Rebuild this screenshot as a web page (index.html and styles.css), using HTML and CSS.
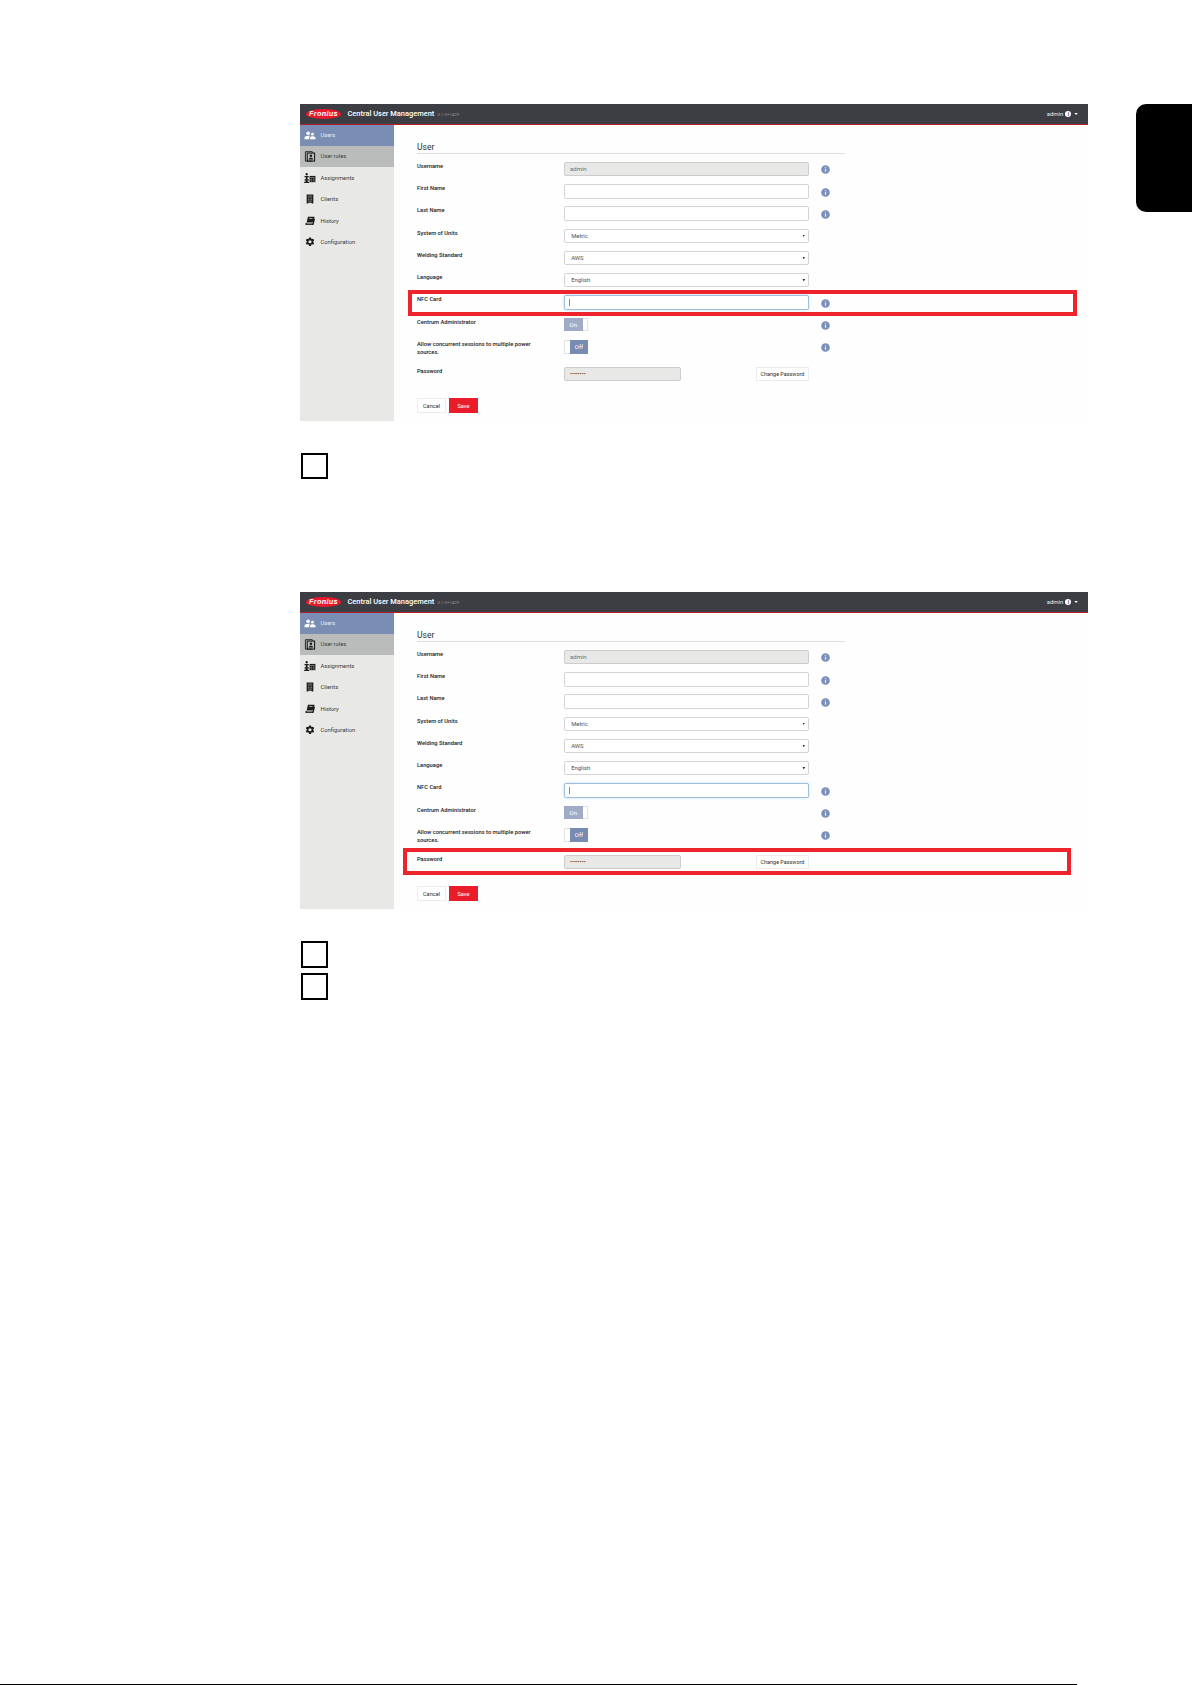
FILE: index.html
```html
<!DOCTYPE html>
<html lang="en">
<head>
<meta charset="utf-8">
<title>Central User Management</title>
<link rel="stylesheet" href="styles.css">
</head>
<body>
<svg class="defs" width="0" height="0">
  <symbol id="info" viewBox="0 0 24 24"><circle cx="12" cy="12" r="11.5" fill="#7b90b8"/><path d="M10.4 10.5h3.2v7.5h-3.2zM10.4 6h3.2v2.8h-3.2z" fill="#e8ecf5"/></symbol>
  <symbol id="users" viewBox="0 0 24 24"><circle cx="8" cy="7" r="4"/><circle cx="17.5" cy="9" r="3"/><path d="M0 20v-3c0-3 4-4.500 8-4.500 1.500 0 3 .2 4.200.7-1.500 1-2.200 2.300-2.200 4V20zM12 20v-2.500c0-2.500 3-3.700 5.700-3.700S24 15 24 17.500V20z"/></symbol>
  <symbol id="roles" viewBox="0 0 24 24"><path d="M2 5v17h15" fill="none" stroke="currentColor" stroke-width="2"/><path d="M2 5V1.500h15V4" fill="none" stroke="currentColor" stroke-width="2"/><rect x="6" y="4.500" width="16" height="17.500" fill="none" stroke="currentColor" stroke-width="2.400"/><circle cx="14" cy="10.500" r="2.800"/><path d="M9 18.500c0-3 2.500-4 5-4s5 1 5 4z"/></symbol>
  <symbol id="assign" viewBox="0 0 28 24"><circle cx="6" cy="3" r="2.800"/><path d="M1 7h10v3H8v5h3v3H8.500v3H12v3H0v-3h3.500v-3H1v-3h3v-5H1z"/><path d="M13 7h14v15H13z"/><path d="M15 11h10M15 15h4M21 15h4M15 19h4M21 19h4" stroke="#d0d0ce" stroke-width="1.300"/></symbol>
  <symbol id="clients" viewBox="0 0 24 24"><path d="M4 1h16v22h-4v-2H8v2H4z"/><path d="M7 5h10M7 9h4M13 9h4M7 13h4M13 13h4M7 17h10" stroke="#c8c8c6" stroke-width="1.300"/></symbol>
  <symbol id="history" viewBox="0 0 24 24"><path d="M7 2h16l-3 13H4zM3 16h16l3-10 2 1-3.500 14.500H3C0 21.500 0 16.500 3 16z"/><path d="M10 6h8M4 18.500h14" stroke="#e8e8e6" stroke-width="1.500"/></symbol>
  <symbol id="gear" viewBox="0 0 24 24"><path fill-rule="evenodd" d="M9.500 1h5l.6 3.200 2 1.100 3-1.100 2.500 4.300-2.400 2.100v2.600l2.400 2.200-2.500 4.300-3-1.100-2 1.200-.6 3.200h-5l-.6-3.200-2-1.200-3 1.100-2.500-4.300 2.400-2.200v-2.600L1.400 8.500l2.500-4.300 3 1.100 2-1.100zM12 8a4 4 0 1 0 0 8 4 4 0 0 0 0-8z"/></symbol>
</svg>

<main class="page">
  <section class="app">
    <header class="bar">
      <span class="logo">Fronius</span><h1 class="brand">Central User Management</h1><span class="version">0.1.0+1409</span>
      <span class="account">admin</span><span class="avatar">i</span><span class="caret"></span>
    </header>
    <div class="body">
      <nav class="side">
        <a class="item active"><svg><use href="#users"/></svg>Users</a>
        <a class="item hover"><svg><use href="#roles"/></svg>User roles</a>
        <a class="item"><svg><use href="#assign"/></svg>Assignments</a>
        <a class="item"><svg><use href="#clients"/></svg>Clients</a>
        <a class="item"><svg><use href="#history"/></svg>History</a>
        <a class="item"><svg class="small"><use href="#gear"/></svg>Configuration</a>
      </nav>
      <div class="form">
        <h2 class="title">User</h2>
        <div class="row"><label>Username</label><div class="field disabled">admin</div><svg class="info"><use href="#info"/></svg></div>
        <div class="row"><label>First Name</label><div class="field"></div><svg class="info"><use href="#info"/></svg></div>
        <div class="row"><label>Last Name</label><div class="field"></div><svg class="info"><use href="#info"/></svg></div>
        <div class="row"><label>System of Units</label><div class="field select">Metric</div></div>
        <div class="row"><label>Welding Standard</label><div class="field select">AWS</div></div>
        <div class="row"><label>Language</label><div class="field select">English</div></div>
        <div class="row"><label>NFC Card</label><div class="field focus"><i class="cursor"></i></div><svg class="info"><use href="#info"/></svg></div>
        <div class="row"><label>Centrum Administrator</label><div class="toggle on"><b>On</b></div><svg class="info"><use href="#info"/></svg></div>
        <div class="row tall"><label>Allow concurrent sessions to multiple power sources.</label><div class="toggle off"><b>Off</b></div><svg class="info"><use href="#info"/></svg></div>
        <div class="row last"><label>Password</label><div class="pair"><div class="field disabled secret">••••••••</div><button class="btn change">Change Password</button></div></div>
        <div class="actions"><button class="btn cancel">Cancel</button><button class="btn save">Save</button></div>
      </div>
    </div>
    <div class="mark nfc"></div>
  </section>
  <div class="steps first"><div class="step"></div></div>

  <section class="app">
    <header class="bar">
      <span class="logo">Fronius</span><h1 class="brand">Central User Management</h1><span class="version">0.1.0+1409</span>
      <span class="account">admin</span><span class="avatar">i</span><span class="caret"></span>
    </header>
    <div class="body">
      <nav class="side">
        <a class="item active"><svg><use href="#users"/></svg>Users</a>
        <a class="item hover"><svg><use href="#roles"/></svg>User roles</a>
        <a class="item"><svg><use href="#assign"/></svg>Assignments</a>
        <a class="item"><svg><use href="#clients"/></svg>Clients</a>
        <a class="item"><svg><use href="#history"/></svg>History</a>
        <a class="item"><svg class="small"><use href="#gear"/></svg>Configuration</a>
      </nav>
      <div class="form">
        <h2 class="title">User</h2>
        <div class="row"><label>Username</label><div class="field disabled">admin</div><svg class="info"><use href="#info"/></svg></div>
        <div class="row"><label>First Name</label><div class="field"></div><svg class="info"><use href="#info"/></svg></div>
        <div class="row"><label>Last Name</label><div class="field"></div><svg class="info"><use href="#info"/></svg></div>
        <div class="row"><label>System of Units</label><div class="field select">Metric</div></div>
        <div class="row"><label>Welding Standard</label><div class="field select">AWS</div></div>
        <div class="row"><label>Language</label><div class="field select">English</div></div>
        <div class="row"><label>NFC Card</label><div class="field focus"><i class="cursor"></i></div><svg class="info"><use href="#info"/></svg></div>
        <div class="row"><label>Centrum Administrator</label><div class="toggle on"><b>On</b></div><svg class="info"><use href="#info"/></svg></div>
        <div class="row tall"><label>Allow concurrent sessions to multiple power sources.</label><div class="toggle off"><b>Off</b></div><svg class="info"><use href="#info"/></svg></div>
        <div class="row last"><label>Password</label><div class="pair"><div class="field disabled secret">••••••••</div><button class="btn change">Change Password</button></div></div>
        <div class="actions"><button class="btn cancel">Cancel</button><button class="btn save">Save</button></div>
      </div>
    </div>
    <div class="mark password"></div>
  </section>
  <div class="steps second"><div class="step"></div><div class="step"></div></div>
  <hr class="rule">
</main>
<aside class="tab"></aside>
</body>
</html>
```

FILE: styles.css
```css
* { box-sizing: border-box; }
body {
  margin: 0;
  width: 1192px;
  height: 1685px;
  overflow: hidden;
  display: flex;
  justify-content: space-between;
  background: #fff;
  font: 6px/8px Roboto, "Liberation Sans", sans-serif;
  color: #333;
}
.defs { position: absolute; }
h1, h2 { margin: 0; }
.page { width: 1088.400px; height: 1685px; padding-top: 104px; display: flex; flex-direction: column; }
.tab { width: 56px; height: 108px; margin-top: 104px; background: #000; border-radius: 10px 0 0 10px; }

/* application window */
.app { position: relative; height: 317px; margin-left: 300.400px; display: flex; flex-direction: column; background: #fefefe; }
.bar {
  height: 21px;
  padding: 0 10.500px 0 5.600px;
  display: flex;
  align-items: center;
  background: #3d3e43;
  border-bottom: 1px solid #b3202c;
  color: #fff;
}
.logo {
  width: 35px;
  height: 9.500px;
  border-radius: 50%;
  background: #e8192c;
  font: italic bold 7.300px/9.500px "Liberation Sans", sans-serif;
  letter-spacing: .3px;
  text-align: center;
}
.brand { margin-left: 6.500px; width: 86.500px; white-space: nowrap; font-size: 7.450px; font-weight: 500; }
.version { margin: 2px auto 0 3.500px; font-size: 4.300px; color: #909196; }
.account { font-size: 6px; color: #e8e8e8; }
.avatar {
  width: 6px; height: 6px; margin: 0 3px 0 2px;
  border-radius: 50%; background: #fff; color: #3d3e43;
  font-size: 5px; line-height: 6px; font-weight: 700; text-align: center;
}
.caret { width: 3.500px; height: 2px; background: #fff; clip-path: polygon(0 0, 100% 0, 50% 100%); }
.body { flex: 1; display: flex; }

/* navigation */
.side { width: 94px; background: #e8e8e6; }
.item { height: 21.400px; display: flex; align-items: center; gap: 4px; padding-left: 4px; font-size: 5.800px; color: #3c3c3c; }
.item svg { width: 12px; height: 10px; fill: currentColor; color: #1c1c1c; }
.item svg.small { height: 9.500px; }
.item.active { height: 20.700px; background: #7a8eb3; color: #e9edf5; }
.item.active svg { height: 11px; color: #fff; }
.item.hover { background: #babcbc; }
.item.hover svg { height: 11px; }

/* user form */
.form { width: 450.600px; padding: 17px 0 0 22.600px; }
.title { height: 12px; margin-bottom: 8px; border-bottom: 1px solid #dedede; font-size: 8.500px; line-height: 10px; font-weight: 400; }
.row { height: 22.220px; display: grid; grid-template-columns: 147px 245px auto; align-items: start; }
.row.tall { height: 27px; }
.row.last { height: 31.500px; }
label { width: 120px; color: #222; font-size: 5.740px; font-weight: 500; }
.field {
  height: 14.300px;
  padding: 0 5px;
  display: flex;
  align-items: center;
  border: 1px solid #d3d4d5;
  border-radius: 2px;
  background: #fff;
  color: #666;
}
.field.disabled { background: #e8e8e6; border-color: #cbcccb; color: #707070; }
.field.select { padding: 0 3px 0 6.200px; justify-content: space-between; font-size: 5.900px; color: #505050; }
.field.select::after { content: ""; width: 2.500px; height: 2.500px; background: #222; clip-path: polygon(0 0, 100% 0, 50% 100%); }
.field.focus { padding-left: 4.500px; border-color: #9fbfe0; box-shadow: 0 0 3px #bfdcf2; }
.cursor { width: 1px; height: 7px; background: #888; }
.info { width: 9px; height: 9px; margin: 3.300px 0 0 12.200px; }
.toggle { width: 24.300px; height: 13.800px; border: 1px solid #e0e2e6; background: #fff; display: flex; }
.toggle b { width: 18.700px; margin: -1px; color: #fff; font-weight: 400; line-height: 13.800px; text-align: center; }
.toggle.on b { background: #a0acc7; }
.toggle.off { justify-content: flex-end; }
.toggle.off b { background: #788bb1; }
.pair { display: flex; justify-content: space-between; }
.field.secret { width: 117px; color: #333; font-size: 5.800px; }
.btn { height: 15px; padding: 0; border: 1px solid #ececec; background: #fff; color: #2c2c2c; font: 5.600px/8px Roboto, sans-serif; }
.change { width: 53px; height: 14.500px; font-size: 5.450px; white-space: nowrap; }
.actions { display: flex; gap: 3px; }
.cancel, .save { width: 29px; }
.save { background: #e91c2a; border-color: #e91c2a; color: #fff; }

/* highlight frames over the window */
.mark { position: absolute; border: 4px solid #ee242c; }
.nfc { left: 107.600px; top: 185.500px; width: 669px; height: 26.500px; }
.password { left: 102.600px; top: 256px; width: 668px; height: 27px; }

/* step boxes */
.steps { margin-left: 301px; display: flex; flex-direction: column; gap: 5px; }
.steps.first { padding-top: 32px; height: 171px; }
.steps.second { padding-top: 32px; }
.step { width: 27px; height: 27px; border: 2px solid #000; }
.first .step { height: 26px; }
.rule { width: 1077px; height: 1px; margin: auto 0 0; border: 0; background: #000; }
```
